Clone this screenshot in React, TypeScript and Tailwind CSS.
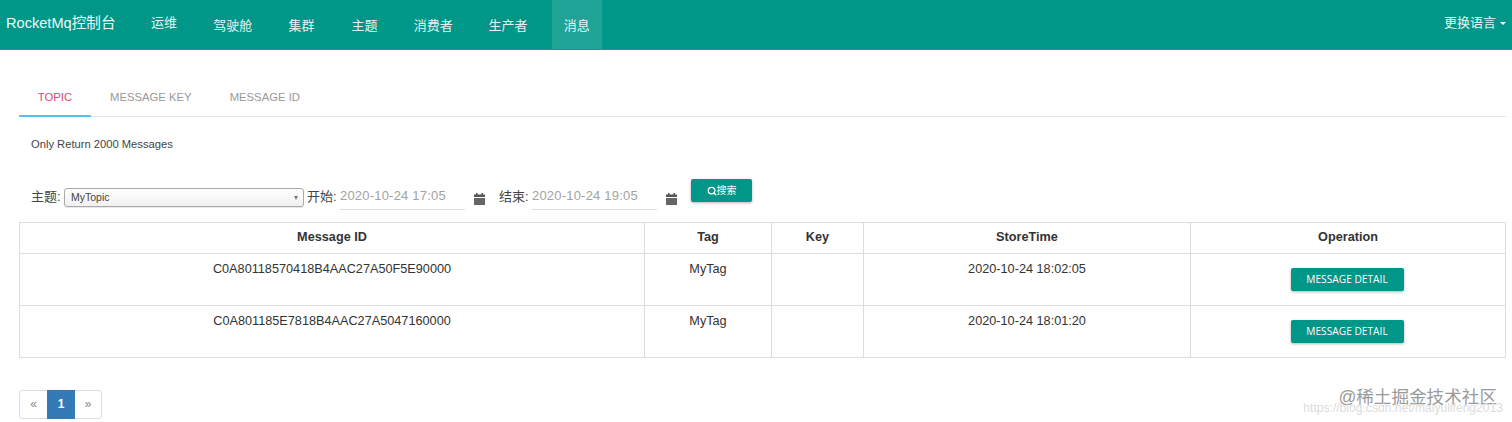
import React from 'react';
import { Search } from 'lucide-react';

const navItems = [
  { label: '运维', w: 'w-[50px]', up: true },
  { label: '驾驶舱', w: 'w-[62px]' },
  { label: '集群', w: 'w-[50px]' },
  { label: '主题', w: 'w-[50px]' },
  { label: '消费者', w: 'w-[62px]' },
  { label: '生产者', w: 'w-[62px]' },
  { label: '消息', w: 'w-[50px]', active: true },
];

const rows = [
  { id: 'C0A80118570418B4AAC27A50F5E90000', tag: 'MyTag', time: '2020-10-24 18:02:05' },
  { id: 'C0A801185E7818B4AAC27A5047160000', tag: 'MyTag', time: '2020-10-24 18:01:20' },
];

function CalendarIcon() {
  return (
    <svg width="11" height="12" viewBox="0 0 11 12" className="shrink-0">
      <rect x="2" y="0" width="1.5" height="2.5" fill="#555" />
      <rect x="7.5" y="0" width="1.5" height="2.5" fill="#555" />
      <rect x="0" y="1.5" width="11" height="2.5" fill="#555" />
      <rect x="0" y="5" width="11" height="7" fill="#666" />
    </svg>
  );
}

function DateInput({ value }: { value: string }) {
  return (
    <div className="w-[125px] h-[30px] border-b border-[#dcdcdc] text-[13px] tracking-[0.2px] text-[#a3a3a3] pt-[6px] leading-[20px]">
      {value}
    </div>
  );
}

function DetailButton() {
  return (
    <button className="w-[113px] h-[23px] bg-[#009688] rounded-[2px] text-white text-[10.2px] font-['Open_Sans',sans-serif] shadow-[0_1px_3px_rgba(0,0,0,0.3)]">
      MESSAGE DETAIL
    </button>
  );
}

export default function App() {
  return (
    <div className="relative w-[1512px] h-[422px] overflow-hidden bg-white font-['Liberation_Sans','Noto_Sans_CJK_SC',sans-serif] text-[#333]">
      {/* top bar */}
      <nav className="h-[50px] bg-[#009688] flex items-stretch text-white border-b border-[#0b9e90]">
        <div className="ml-[6px] w-[133px] text-[14.6px] leading-[46px] text-[#eefaf8]">RocketMq控制台</div>
        <div className="flex gap-[12.8px]">
          {navItems.map((n) => (
            <div
              key={n.label}
              className={`${n.w} text-center text-[13px] text-[#e3f5f2] ${n.up ? 'leading-[46px]' : 'leading-[51px]'} ${n.active ? 'bg-[#1fa396]' : ''}`}
            >
              {n.label}
            </div>
          ))}
        </div>
        <div className="ml-auto mr-[6px] flex items-center gap-[4px] text-[13px] pb-[3px] text-[#e3f5f2]">
          更换语言
          <span className="w-0 h-0 border-x-[3px] border-x-transparent border-t-[3px] border-t-white" />
        </div>
      </nav>

      <div className="pl-[19px] pr-[6px]">
        {/* tabs */}
        <div className="mt-[27px] h-[40px] flex border-b border-[#e2e2e2] text-[11.3px] leading-[40px]">
          <div className="w-[72px] h-[40px] text-center text-[#e0457b] border-b-2 border-[#4fc3ee]">TOPIC</div>
          <div className="ml-[19px] text-[#999]">MESSAGE KEY</div>
          <div className="ml-[38px] text-[#999]">MESSAGE ID</div>
        </div>

        <p className="ml-[12px] mt-[20px] text-[11.2px] leading-[14px] text-[#444]">Only Return 2000 Messages</p>

        {/* filter */}
        <div className="ml-[12px] mt-[29px] h-[36px] flex items-start text-[13px] text-[#444]">
          <span className="mt-[9px] leading-[16px] w-[33px]">主题:</span>
          <div className="mt-[8px] w-[240px] h-[19px] rounded-[3px] border border-[#aaa] bg-gradient-to-b from-white to-[#f0f0f0] flex items-center justify-between pl-[6px] pr-[5px] text-[10.5px] shadow-[0_1px_1px_rgba(0,0,0,0.1)]">
            MyTopic
            <span className="w-0 h-0 border-x-[2.5px] border-x-transparent border-t-[4px] border-t-[#777]" />
          </div>
          <span className="ml-[3px] mt-[9px] leading-[16px] w-[33px]">开始:</span>
          <DateInput value="2020-10-24 17:05" />
          <div className="ml-[9px] mt-[13px]"><CalendarIcon /></div>
          <span className="ml-[14px] mt-[9px] leading-[16px] w-[33px]">结束:</span>
          <DateInput value="2020-10-24 19:05" />
          <div className="ml-[9px] mt-[13px]"><CalendarIcon /></div>
          <button className="ml-[14px] -mt-[1px] w-[61px] h-[23px] bg-[#009688] rounded-[2px] text-white text-[10px] flex items-center justify-center shadow-[0_1px_3px_rgba(0,0,0,0.3)]">
            <Search size={10} strokeWidth={3} />搜索
          </button>
        </div>

        {/* table */}
        <table className="mt-[6px] w-[1487px] table-fixed border-collapse border border-[#ddd] text-[12.7px]">
          <thead>
            <tr className="h-[31px]">
              <th className="w-[625px] border border-[#ddd] font-bold">Message ID</th>
              <th className="w-[127px] border border-[#ddd] font-bold">Tag</th>
              <th className="w-[92px] border border-[#ddd] font-bold">Key</th>
              <th className="w-[327px] border border-[#ddd] font-bold">StoreTime</th>
              <th className="border border-[#ddd] font-bold">Operation</th>
            </tr>
          </thead>
          <tbody>
            {rows.map((r) => (
              <tr key={r.id} className="h-[52px]">
                <td className="border border-[#ddd] text-center align-top pt-[8px] leading-[14px]">{r.id}</td>
                <td className="border border-[#ddd] text-center align-top pt-[8px] leading-[14px]">{r.tag}</td>
                <td className="border border-[#ddd]" />
                <td className="border border-[#ddd] text-center align-top pt-[8px] leading-[14px]">{r.time}</td>
                <td className="border border-[#ddd] text-center align-top pt-[14px] pr-[2px]"><DetailButton /></td>
              </tr>
            ))}
          </tbody>
        </table>

        {/* pagination */}
        <div className="mt-[32px] inline-flex h-[29px] rounded-[3px] border border-[#ddd] text-[12px] leading-[27px] text-center">
          <span className="w-[27px] text-[#888]">«</span>
          <span className="w-[28px] h-[29px] -mt-px bg-[#337ab7] text-white font-bold leading-[29px]">1</span>
          <span className="w-[26px] text-[#888]">»</span>
        </div>
      </div>

      {/* watermark */}
      <div className="absolute right-[15px] top-[385px] text-[17.6px] leading-[24px] text-[#9a9a9a]">@稀土掘金技术社区</div>
      <div className="absolute right-[9px] top-[401px] text-[12.1px] leading-[14px] text-[#dcdcdc]">https://blog.csdn.net/maiyulifeng2013</div>
    </div>
  );
}
